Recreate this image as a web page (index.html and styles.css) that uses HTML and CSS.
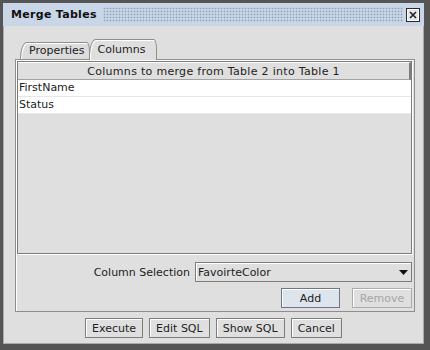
FILE: index.html
```html
<!DOCTYPE html>
<html>
<head>
    <title>Merge Tables</title>
    <link rel="stylesheet" href="styles.css">
</head>
<body>
    <div class="window">
        <div class="titlebar">
            <span class="title">Merge Tables</span>
            <div class="grip"></div>
            <div class="close-btn">
                <svg width="14" height="14" viewBox="0 0 14 14">
                    <rect x="0.5" y="0.5" width="13" height="13" fill="#e4e8ee" stroke="#2a2a2a"/>
                    <rect x="1.5" y="1.5" width="11" height="11" fill="none" stroke="#ffffff"/>
                    <path d="M4 4 L10 10 M10 4 L4 10" stroke="#222" stroke-width="1.6"/>
                </svg>
            </div>
        </div>

        <div class="content">
            <div class="tabs">
                <div class="tab">Properties</div>
                <div class="tab active">Columns</div>
            </div>

            <div class="panel">
                <div class="grid">
                    <div class="grid-header">Columns to merge from Table 2 into Table 1</div>
                    <div class="grid-row">FirstName</div>
                    <div class="grid-row">Status</div>
                </div>

                <div class="select-row">
                    <span class="label">Column Selection</span>
                    <div class="combo">
                        <span>FavoirteColor</span>
                        <svg width="9" height="5" viewBox="0 0 9 5"><path d="M0 0 H9 L4.5 5 Z" fill="#111"/></svg>
                    </div>
                </div>

                <div class="add-row">
                    <button class="btn btn-default">Add</button>
                    <button class="btn" disabled>Remove</button>
                </div>
            </div>

            <div class="actions">
                <button class="btn">Execute</button>
                <button class="btn">Edit SQL</button>
                <button class="btn">Show SQL</button>
                <button class="btn">Cancel</button>
            </div>
        </div>
    </div>
</body>
</html>
```

FILE: styles.css
```css
body {
    margin: 0;
    font-family: "DejaVu Sans", sans-serif;
    font-size: 11px;
    color: #222;
    background: #dfdfdf;
}
.window {
    width: 430px;
    height: 350px;
    box-sizing: border-box;
    display: flex;
    flex-direction: column;
    background: #dfdfdf;
    border-style: solid;
    border-color: #555;
    border-width: 3px 6px 6px 3px;
    box-shadow: inset 1px 1px 0 #a8a8a8, inset -1px -1px 0 #a8a8a8;
}
.titlebar {
    height: 23px;
    display: flex;
    align-items: center;
    padding: 0 4px 0 8px;
    background: #c9d6e7;
}
.title {
    font-weight: bold;
    font-size: 11px;
    letter-spacing: 0.3px;
    color: #111;
}
.grip {
    flex: 1;
    height: 15px;
    margin: 0 3px 0 6px;
    background-image: radial-gradient(circle, #93a3ba 0.8px, transparent 1.1px);
    background-size: 3px 3px;
}
.close-btn {
    width: 14px;
    height: 14px;
    display: flex;
}
.content {
    flex: 1;
    display: flex;
    flex-direction: column;
    padding: 13px 9px 0 12px;
}
.tabs {
    display: flex;
    align-items: flex-end;
    height: 20px;
    padding-left: 5px;
    position: relative;
    z-index: 1;
}
.tab {
    box-sizing: border-box;
    height: 17px;
    padding: 0 4px 0 8px;
    line-height: 16px;
    border: 1px solid #8e8e8e;
    border-bottom: none;
    border-top-left-radius: 7px 16px;
    border-top-right-radius: 3px 10px;
    box-shadow: inset 1px 1px 0 #ffffff;
    background: #dcdcdc;
}
.tab.active {
    height: 21px;
    margin-bottom: -1px;
    margin-left: -1px;
    padding: 0 11px 0 8px;
    line-height: 20px;
    background: #dfdfdf;
}
.panel {
    display: flex;
    flex-direction: column;
    border: 1px solid #8e8e8e;
    box-shadow: inset 1px 1px 0 #ffffff;
    padding: 1px 2px 3px 1px;
}
.grid {
    height: 193px;
    box-sizing: border-box;
    border: 1px solid #7c7c7c;
    box-shadow: 1px 1px 0 #ffffff;
    background: #dfdfdf;
}
.grid-header {
    height: 18px;
    line-height: 17px;
    text-align: center;
    letter-spacing: 0.3px;
    box-sizing: border-box;
    border-top: 1px solid #ffffff;
    border-bottom: 1px solid #a2a2a2;
    border-right: 2px solid #7c7c7c;
}
.grid-row {
    height: 17px;
    line-height: 16px;
    padding-left: 1px;
    box-sizing: border-box;
    background: #ffffff;
    border-bottom: 1px solid #e6e6e6;
}
.select-row {
    display: flex;
    justify-content: flex-end;
    align-items: center;
    gap: 5px;
    margin-top: 8px;
}
.label {
    color: #222;
}
.combo {
    width: 217px;
    height: 20px;
    box-sizing: border-box;
    display: flex;
    align-items: center;
    justify-content: space-between;
    padding: 0 3px 0 2px;
    border: 1px solid #7c7c7c;
    box-shadow: inset 1px 1px 0 #ffffff;
}
.add-row {
    display: flex;
    justify-content: flex-end;
    gap: 12px;
    margin-top: 6px;
}
.btn {
    height: 20px;
    padding: 0 6px;
    font-family: "DejaVu Sans", sans-serif;
    font-size: 11px;
    color: #222;
    background: #dfdfdf;
    border: 1px solid #7c7c7c;
    box-shadow: inset 1px 1px 0 #ffffff;
}
.add-row .btn {
    width: 59px;
}
.add-row .btn:last-child {
    width: 60px;
}
.btn-default {
    background: #dde4ec;
    border-color: #6c7684;
}
.btn:disabled {
    color: #a6a6a6;
    border-color: #acacac;
}
.actions {
    display: flex;
    justify-content: center;
    gap: 6px;
    margin-top: 6px;
    padding-right: 3px;
}
```
